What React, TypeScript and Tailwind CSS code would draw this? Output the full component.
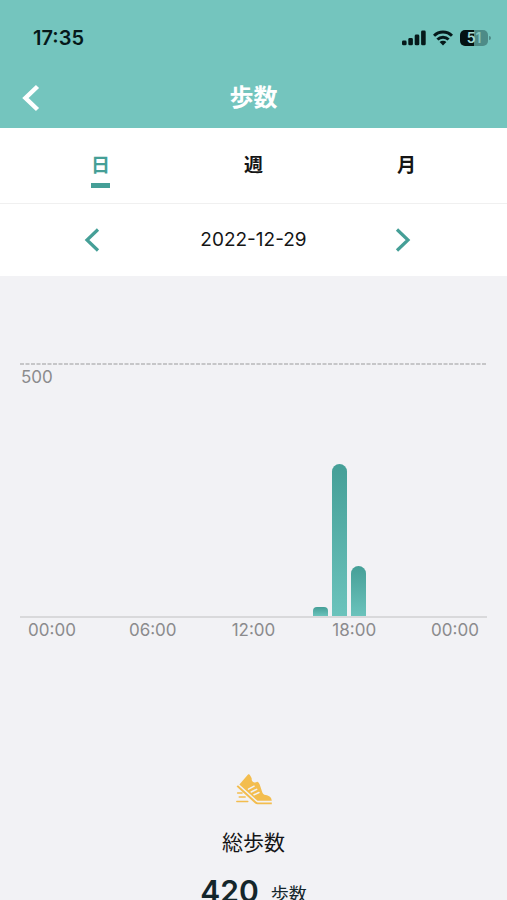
import React, { useState } from 'react';

const tabs = ['日', '週', '月'];
const timeLabels = ['00:00', '06:00', '12:00', '18:00', '00:00'];

const CHART_MAX = 500;

// hour -> steps
const steps: Record<number, number> = { 15: 18, 16: 302, 17: 100 };
const hours = Array.from({ length: 24 }, (_, hour) => steps[hour] ?? 0);
const total = hours.reduce((sum, value) => sum + value, 0);

function StatusIcons() {
  return (
    <div className="flex items-center gap-[7px]">
      <svg className="w-6 h-4" viewBox="0 0 24 16" fill="#06191a">
        <rect x="0" y="10.5" width="4.6" height="4.8" rx="1.4" />
        <rect x="6.3" y="8" width="4.6" height="7.3" rx="1.4" />
        <rect x="12.700" y="4.5" width="4.6" height="10.8" rx="1.4" />
        <rect x="19.1" y="0.5" width="4.6" height="14.8" rx="1.4" />
      </svg>
      <svg className="w-5 h-4" viewBox="0 0 20 16" fill="none" stroke="#06191a" strokeWidth="3">
        <path d="M1 5.8C6 .7 14 .7 19 5.8" />
        <path d="M4.4 9.5c3.2-3 8-3 11.2 0" />
        <path d="M10 15.5 6.6 12c1.900-1.700 4.900-1.700 6.800 0z" fill="#06191a" stroke="none" />
      </svg>
      <div className="flex items-center gap-px">
        <div className="w-7 h-4 rounded-[5px] bg-linear-to-r from-[#041212] from-50% to-[#4d8b87] to-50% flex items-center justify-center text-sm leading-4 font-semibold">
          <span className="text-[#a5dbd6]">5</span>
          <span className="text-[#83c5bf]">1</span>
        </div>
        <span className="w-0.5 h-1 rounded-r-full bg-[#4d8b87]" />
      </div>
    </div>
  );
}

function ShoeIcon() {
  return (
    <svg className="w-9 h-8" viewBox="0 0 36 32" fill="#f3bd4e">
      <path d="M3.400 11.500 11.800 1.800c.6-.7 1.600-.6 2.100.2l1.800 3.200c-.3 2.200.6 3.900 2.700 4.300 1 .2 2-.2 2.700-.7 1.200.2 2.200 1.400 2.700 3l2.200 6.600c.7 2.100 1.700 3.200 3.700 3.700 3.600.8 5.700 2 6.100 5.700H21.500z" />
      <path d="M2.300 12.400 20.300 28.800c.5.400 1 .6 1.600.6h13.900v1.800H21.300c-.8 0-1.500-.3-2.100-.8L1.100 14c-.5-.4-.5-.8-.1-1.200z" />
      <path d="m12.500 16.200 5.600-3m-2.900 5.800 5.500-2.700m-2.700 5.400 5-2.200" fill="none" stroke="#f2f2f5" strokeWidth="1.500" strokeLinecap="round" />
      <path d="M1.600 20h4.500M3.200 24h6M.8 28.500h11" fill="none" stroke="#f3bd4e" strokeWidth="1.400" strokeLinecap="round" />
    </svg>
  );
}

function StepsChart() {
  return (
    <section className="mt-[87px] mx-5 text-[#8b8b8d] text-[17px] leading-6">
      <svg className="block w-full h-0.5">
        <line x1="0" y1="1" x2="100%" y2="1" stroke="#c6c6c8" strokeWidth="2" strokeDasharray="4 1.5" />
      </svg>
      <div className="h-[253px] border-b-2 border-[#d9d9db] grid">
        <span className="col-start-1 row-start-1 pl-px">500</span>
        <div className="col-start-1 row-start-1 flex items-end pl-[7px] pr-[5px]">
          {hours.map((value, hour) => (
            <div key={hour} className="flex-1 h-full px-0.5 flex items-end">
              <div
                className={`w-full bg-linear-to-b from-[#459f97] to-[#6bc3bc] ${value < 50 ? 'rounded-t-sm' : 'rounded-t-lg'}`}
                style={{ height: `${(value / CHART_MAX) * 100}%` }}
              />
            </div>
          ))}
        </div>
      </div>
      <div className="flex justify-between px-2">
        {timeLabels.map((label, index) => (
          <span key={index} className="w-12 text-center">{label}</span>
        ))}
      </div>
    </section>
  );
}

function App() {
  const [activeTab, setActiveTab] = useState('日');

  return (
    <div className="h-screen overflow-hidden bg-[#f2f2f5] text-[#151515] font-['Inter','Noto_Sans_CJK_JP',sans-serif]">
      {/* ヘッダー */}
      <header className="bg-[#74c5be]">
        <div className="h-[68px] pt-2 pl-[33px] pr-4 flex items-center justify-between">
          <span className="text-xl font-semibold text-[#06191a]">17:35</span>
          <StatusIcons />
        </div>
        <div className="h-[60px] px-5 grid grid-cols-[24px_1fr_24px] items-center">
          <button type="button" aria-label="戻る">
            <svg className="w-6 h-7" viewBox="0 0 24 28" fill="none" stroke="#fff" strokeWidth="4.500">
              <path d="M17.500 2.500 5.500 14l12 11.500" />
            </svg>
          </button>
          <h1 className="text-center text-2xl font-bold text-white">歩数</h1>
        </div>
      </header>

      <div className="bg-white">
        {/* 期間タブ */}
        <nav className="h-[76px] px-6 grid grid-cols-3 border-b border-[#f0f0f0]">
          {tabs.map(tab => (
            <button
              key={tab}
              type="button"
              onClick={() => setActiveTab(tab)}
              className={`flex flex-col items-center pt-6 text-[19px] leading-7 font-bold ${activeTab === tab ? 'text-[#459f97]' : ''}`}
            >
              {tab}
              <span className={`mt-[3px] w-[19px] h-[5px] ${activeTab === tab ? 'bg-[#459f97]' : ''}`} />
            </button>
          ))}
        </nav>

        {/* 日付 */}
        <div className="h-[72px] pl-20 pr-[92px] grid grid-cols-[24px_1fr_24px] items-center">
          <button type="button" aria-label="前の日">
            <svg className="w-6 h-6" viewBox="0 0 24 24" fill="none" stroke="#459f97" strokeWidth="3.200">
              <path d="M18 1.500 7 12l11 10.500" />
            </svg>
          </button>
          <time dateTime="2022-12-29" className="pl-3 text-center text-[19px]">2022-12-29</time>
          <button type="button" aria-label="次の日">
            <svg className="w-6 h-6" viewBox="0 0 24 24" fill="none" stroke="#459f97" strokeWidth="3.200">
              <path d="M6 1.500 17 12 6 22.500" />
            </svg>
          </button>
        </div>
      </div>

      <StepsChart />

      {/* 合計 */}
      <section className="mt-[131px] flex flex-col items-center">
        <ShoeIcon />
        <h2 className="mt-[22px] text-[21px] leading-8">総歩数</h2>
        <p className="mt-3 flex items-end gap-3 text-[#14262b]">
          <span className="text-3xl leading-10 font-semibold">{total}</span>
          <span className="text-lg leading-8">歩数</span>
        </p>
      </section>
    </div>
  );
}

export default App;
